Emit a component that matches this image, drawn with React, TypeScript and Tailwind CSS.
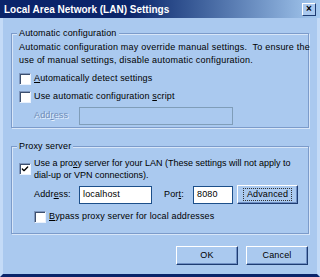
import { Check } from "lucide-react";

const font = "font-['Liberation_Sans',Arial,sans-serif]";

function CheckBox({ checked = false }: { checked?: boolean }) {
  return (
    <span className="flex h-[12px] w-[12px] shrink-0 items-center justify-center border border-t-[#7f97bd] border-l-[#7f97bd] border-b-[#eaf2fd] border-r-[#eaf2fd] bg-white shadow-[inset_1px_1px_0_#3c4f6e]">
      {checked && <Check size={8} strokeWidth={4} className="text-black" />}
    </span>
  );
}

function TextBox({ value = "", disabled = false, className = "" }: { value?: string; disabled?: boolean; className?: string }) {
  return (
    <div
      className={`flex h-[18px] items-center border px-[3px] ${
        disabled ? "border-[#7f9db9] bg-[#aac9ef]" : "border-[#1c4f8a] bg-white"
      } ${className}`}
    >
      {value}
    </div>
  );
}

function Button({ label, focus = false, className = "" }: { label: string; focus?: boolean; className?: string }) {
  return (
    <div
      className={`flex h-[19px] items-center justify-center border border-t-white border-l-white border-b-[#1e3c72] border-r-[#1e3c72] bg-[#aac9ef] shadow-[inset_-1px_-1px_0_#6f8fc4] ${className}`}
    >
      <span className={focus ? "border border-dotted border-[#333] px-[3px] leading-[11px]" : ""}>{label}</span>
    </div>
  );
}

function Group({ title, className = "", children }: { title: string; className?: string; children: React.ReactNode }) {
  return (
    <div className={`relative border border-[#7c9bca] shadow-[1px_1px_0_#d8e6f8,inset_1px_1px_0_#d8e6f8] ${className}`}>
      <span className="absolute left-[5px] top-[-7px] bg-[#aac9ef] px-[2px] leading-[12px]">{title}</span>
      {children}
    </div>
  );
}

export default function App() {
  return (
    <div className={`flex h-[277px] w-[320px] flex-col whitespace-nowrap bg-[#aac9ef] text-[9px] tracking-[0.15px] text-black ${font}`}>
      <div className="flex h-[18px] items-center justify-between bg-gradient-to-r from-[#0a246a] from-40% to-[#a6caf0] pl-[4px] pr-[4px]">
        <span className="text-[10px] font-bold tracking-normal text-white">Local Area Network (LAN) Settings</span>
        <div className="flex h-[13px] w-[14px] items-center justify-center border border-t-white border-l-white border-b-[#1e3c72] border-r-[#1e3c72] bg-[#aac9ef] text-[10px] font-bold leading-none">
          ×
        </div>
      </div>

      <div className="flex flex-1 flex-col border-x-[3px] border-b-[3px] border-x-[#c4dbf7] border-b-[#0a246a] px-[8px]">
        <Group title="Automatic configuration" className="mt-[15px] h-[95px] px-[7px] pt-[7px]">
          <p className="leading-[13px] tracking-[0.22px]">
            Automatic configuration may override manual settings.&nbsp; To ensure the
            <br />
            use of manual settings, disable automatic configuration.
          </p>
          <div className="mt-[5px] flex h-[13px] items-center gap-[3px]">
            <CheckBox />
            <span>
              <u>A</u>utomatically detect settings
            </span>
          </div>
          <div className="mt-[5px] flex h-[13px] items-center gap-[3px]">
            <CheckBox />
            <span>
              Use automatic configuration <u>s</u>cript
            </span>
          </div>
          <div className="mt-[4px] flex items-center pl-[15px]">
            <span className="w-[45px] text-[#6f8cb8] [text-shadow:1px_1px_0_#e6f0fc]">
              Add<u>r</u>ess
            </span>
            <TextBox disabled className="w-[154px]" />
          </div>
        </Group>

        <Group title="Proxy server" className="mt-[18px] h-[88px] px-[7px] pt-[10px]">
          <div className="flex items-center gap-[3px]">
            <CheckBox checked />
            <span className="leading-[12px] tracking-normal">
              Use a pro<u>x</u>y server for your LAN (These settings will not apply to
              <br />
              dial-up or VPN connections).
            </span>
          </div>
          <div className="mt-[4px] flex items-center pl-[15px]">
            <span className="w-[45px]">
              Addr<u>e</u>ss:
            </span>
            <TextBox value="localhost" className="w-[73px]" />
            <span className="ml-[12px] w-[29px]">
              Por<u>t</u>:
            </span>
            <TextBox value="8080" className="w-[40px]" />
            <Button label="Advanced" focus className="ml-[4px] w-[61px]" />
          </div>
          <div className="mt-[6px] flex h-[13px] items-center gap-[3px] pl-[15px]">
            <CheckBox />
            <span>
              <u>B</u>ypass proxy server for local addresses
            </span>
          </div>
        </Group>

        <div className="mt-[12px] flex justify-end gap-[8px] pr-[1px]">
          <Button label="OK" className="w-[62px]" />
          <Button label="Cancel" className="w-[62px]" />
        </div>
      </div>
    </div>
  );
}
